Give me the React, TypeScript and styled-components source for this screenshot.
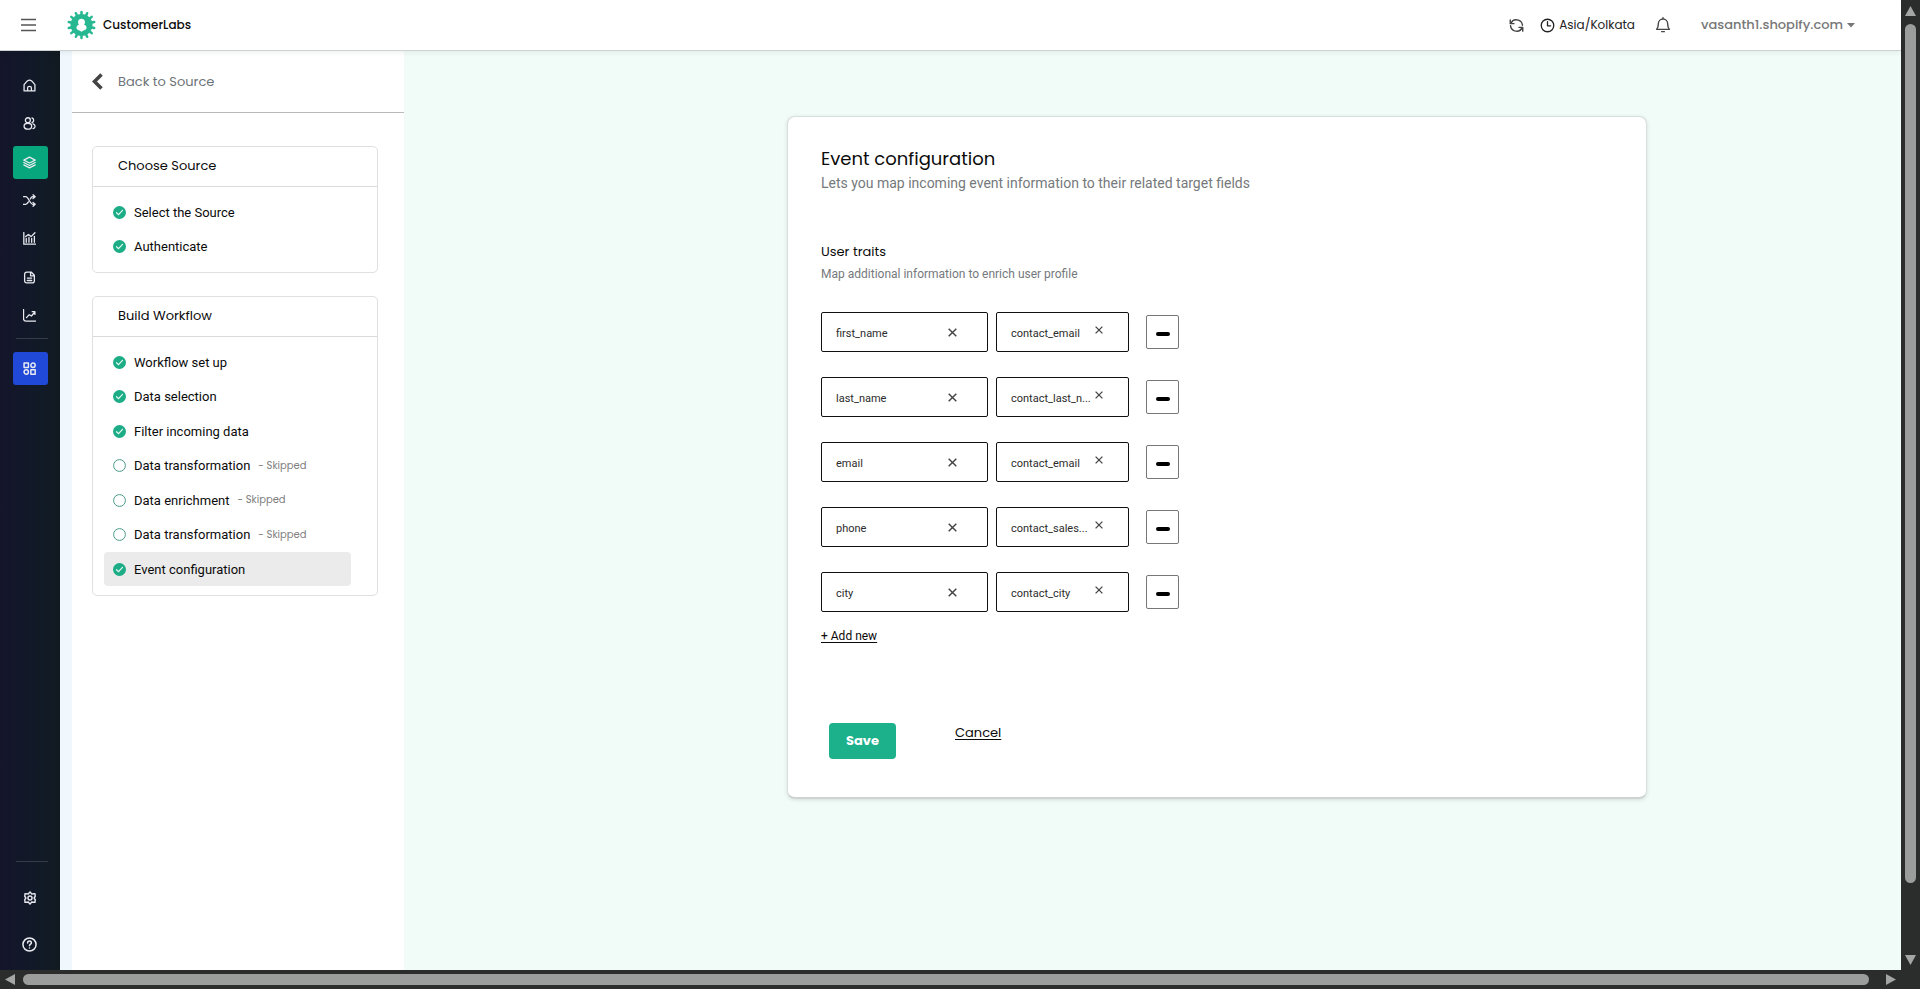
import React from "react";
import styled, { createGlobalStyle, css } from "styled-components";

const heading = `Poppins, Inter, "Open Sans", sans-serif`;
const copy = `Roboto, "Liberation Sans", sans-serif`;

const GlobalStyle = createGlobalStyle`
  *, *::before, *::after { box-sizing: border-box; }
  body { margin: 0; background: #2b2d2d; font-family: ${copy}; color: #0b0b0b; }
  button, input { font: inherit; color: inherit; }
  button { padding: 0; border: 0; background: none; cursor: pointer; }
  a { color: inherit; text-decoration: none; }
  h1, h2, h3, p, ul { margin: 0; padding: 0; font-weight: 400; }
  ul { list-style: none; }
  svg { display: block; flex: none; }
`;

const Frame = styled.div`
  display: grid;
  grid-template: minmax(0, 1fr) 19px / minmax(0, 1fr) 19px;
  min-height: 100vh;
`;

const Page = styled.div`
  display: flex;
  flex-direction: column;
  background: #f1fbf8;
`;

const Header = styled.header`
  display: flex;
  align-items: center;
  height: 51px;
  padding: 0 46px 0 20px;
  background: #fff;
  border-bottom: 1px solid #cdd3d2;
  box-shadow: 0 1px 6px rgba(0, 0, 0, 0.08);
  z-index: 1;
`;

const MenuButton = styled.button`
  color: #555;
`;

const Brand = styled.a`
  display: flex;
  align-items: center;
  gap: 7px;
  margin-left: 30px;
  font: 500 12px/20px ${heading};
`;

const HeaderTools = styled.div`
  display: flex;
  align-items: center;
  margin-left: auto;
  color: #444;
  font: 500 12px/20px ${heading};
`;

const Zone = styled.span`
  display: flex;
  align-items: center;
  gap: 4px;
  margin: 0 20px 0 16px;
  font-weight: 400;
  color: #222;
`;

const Account = styled.button`
  display: flex;
  align-items: center;
  gap: 4px;
  margin-left: 30px;
  font-size: 13px;
  color: #777;
`;

const Body = styled.div`
  display: flex;
  flex: 1;
`;

const Rail = styled.nav`
  display: flex;
  flex-direction: column;
  width: 60px;
  padding: 15px 12px 9px 13px;
  background: linear-gradient(90deg, #14152b, #111a27 70%, #121a20);
  color: #e8eaf0;
`;

const RailList = styled.ul`
  display: grid;
  grid-auto-rows: 1fr;
  align-items: center;
  height: 269px;
`;

const RailLink = styled.a<{ $fill?: string }>`
  display: flex;
  align-items: center;
  justify-content: center;
  height: 33px;
  padding-right: 2px;
  border-radius: 3px;
  background: ${(p) => p.$fill ?? "transparent"};
`;

const RailRule = styled.hr`
  width: 32px;
  height: 1px;
  margin: 3px 0 13px 3px;
  border: 0;
  background: #343b48;
`;

const RailFoot = styled.div`
  display: grid;
  gap: 14px;
  margin-top: auto;

  ${RailRule} {
    margin-bottom: 5px;
  }
`;

const Steps = styled.aside`
  width: 332px;
  margin-left: 12px;
  background: #fff;
  box-shadow: -12px 0 0 #f0f8fe;
`;

const Back = styled.a`
  display: flex;
  align-items: center;
  gap: 15px;
  height: 62px;
  padding-left: 20px;
  border-bottom: 1px solid #b9b9b9;
  font: 400 13px/20px ${heading};
  color: #6d7378;
`;

const StepCards = styled.div`
  display: grid;
  gap: 23px;
  padding: 33px 26px 33px 20px;
`;

const StepCard = styled.section`
  border: 1px solid #dfe0e0;
  border-radius: 5px;
`;

const StepTitle = styled.h2`
  padding: 9px 25px 10px;
  border-bottom: 1px solid #d9dbdb;
  font: 400 13px/20px ${heading};
`;

const StepList = styled.ul<{ $height: number }>`
  display: grid;
  grid-auto-rows: 1fr;
  height: ${(p) => p.$height}px;
  margin: 8px 26px 8px 11px;
`;

const StepLink = styled.a<{ $current?: boolean }>`
  display: flex;
  align-items: center;
  gap: 8px;
  height: 34px;
  padding-left: 9px;
  border-radius: 4px;
  font-size: 13px;
  ${(p) => p.$current && css`background: #ebebeb;`}
`;

const Skipped = styled.span`
  font: 400 10px/16px ${heading};
  color: #808080;
`;

const Main = styled.main`
  flex: 1;
  min-width: 0;
  padding: 65px 254px 65px 383px;
`;

const Card = styled.section`
  padding: 30px 33px 38px;
  background: #fff;
  border: 1px solid #d9dfdd;
  border-bottom: 2px solid #cdd4d2;
  border-radius: 8px;
  box-shadow: 0 1px 4px rgba(0, 0, 0, 0.12);
`;

const Title = styled.h1`
  font: 400 18px/24px ${heading};
`;

const Lead = styled.p`
  font-size: 14px;
  line-height: 24px;
  color: #75797c;
`;

const SectionTitle = styled.h2`
  margin-top: 47px;
  font: 400 13px/20px ${heading};
`;

const SectionLead = styled.p`
  font-size: 12px;
  line-height: 24px;
  color: #75797c;
`;

const Mappings = styled.div`
  display: grid;
  gap: 25px;
  margin-top: 26px;
`;

const Mapping = styled.div`
  display: flex;
  align-items: center;
  gap: 8px;
`;

const Field = styled.div<{ $wide?: boolean }>`
  display: flex;
  align-items: center;
  width: ${(p) => (p.$wide ? 167 : 133)}px;
  height: 40px;
  padding: 0 ${(p) => (p.$wide ? 30 : 25)}px 0 14px;
  border: 1px solid #111;
  border-radius: 2px;
`;

const FieldInput = styled.input`
  flex: 1;
  min-width: 0;
  height: 24px;
  padding: 2px 0 0;
  border: 0;
  outline: 0;
  background: none;
  font-size: 11px;
  color: #2c2c2c;
`;

const Clear = styled.button<{ $raised?: boolean }>`
  margin-bottom: ${(p) => (p.$raised ? 4 : 0)}px;
  color: #444;
`;

const Remove = styled.button`
  display: flex;
  align-items: center;
  justify-content: center;
  width: 33px;
  height: 34px;
  margin-left: 9px;
  padding-top: 4px;
  border: 1px solid #777;
  border-radius: 2px;
`;

const AddNew = styled.button`
  display: block;
  margin-top: 14px;
  font-size: 12px;
  line-height: 20px;
  text-decoration: underline;
  text-underline-offset: 2px;
`;

const Actions = styled.div`
  display: flex;
  align-items: flex-start;
  gap: 59px;
  margin: 77px 0 0 8px;
`;

const Save = styled.button`
  width: 67px;
  height: 36px;
  border-radius: 4px;
  background: #1cb08b;
  color: #fff;
  font: 700 13px/20px ${heading};
`;

const Cancel = styled.a`
  font: 400 13px/20px ${heading};
  text-decoration: underline;
  text-underline-offset: 2px;
`;

const ScrollTrack = styled.div<{ $vertical?: boolean }>`
  display: flex;
  flex-direction: ${(p) => (p.$vertical ? "column" : "row")};
  align-items: center;
  justify-content: space-between;
  gap: 7px;
  padding: ${(p) => (p.$vertical ? "6px 0 4px" : "0 5px 0 5px")};
  background: #2b2d2d;
`;

const ScrollRun = styled.div`
  flex: 1;
  align-self: stretch;
`;

const ScrollThumb = styled.div<{ $vertical?: boolean }>`
  width: ${(p) => (p.$vertical ? "11px" : "calc(100% - 9px)")};
  height: ${(p) => (p.$vertical ? "93%" : "11px")};
  margin: ${(p) => (p.$vertical ? "0 4px" : "4px 0")};
  border-radius: 6px;
  background: #9b9d9c;
`;

const Stroke = ({ size = 14, width = 1.5, children }: { size?: number; width?: number; children: React.ReactNode }) => (
  <svg width={size} height={size} viewBox="0 0 24 24" fill="none" stroke="currentColor" strokeWidth={width * 1.6} strokeLinecap="round" strokeLinejoin="round" aria-hidden>
    {children}
  </svg>
);

const Arrow = ({ d }: { d: string }) => (
  <svg width="11" height="11" viewBox="0 0 11 11" fill="#a4a6a5" aria-hidden><path d={d} /></svg>
);

const Logo = () => (
  <svg width="29" height="30" viewBox="-15 -15 30 30" aria-hidden>
    <g stroke="#27b892" strokeWidth="2.6" strokeLinecap="round">
      {Array.from({ length: 14 }, (_, i) => (
        <path key={i} d="M0 -10V-13.5" transform={`rotate(${(i * 360) / 14})`} />
      ))}
    </g>
    <circle r="11.4" fill="#27b892" />
    <path fill="#fff" d="M0 -6.400c2.200 0 3.600 1.500 3.600 3.500 0 1.200-.4 2-1 2.700C4.400.3 5.200 1.400 5.200 2.800 5.200 4.600 3.800 5.200 2.600 5.400L0 7 -2.600 5.400C-3.800 5.200-5.200 4.600-5.200 2.800-5.200 1.400-4.400.3-2.600-.2-3.200-.9-3.600-1.700-3.600-2.900c0-2 1.400-3.500 3.600-3.500z" />
  </svg>
);

const Done = () => (
  <svg width="13" height="13" viewBox="0 0 13 13" aria-hidden>
    <circle cx="6.500" cy="6.500" r="6.500" fill="#1cac86" />
    <path d="M3.500 6.700l2 1.900 4-4.300" fill="none" stroke="#e3f7f1" strokeWidth="1.200" strokeLinecap="round" />
  </svg>
);

const Pending = () => (
  <svg width="13" height="13" viewBox="0 0 13 13" aria-hidden>
    <circle cx="6.500" cy="6.500" r="5.900" fill="none" stroke="#4a9a88" strokeWidth="1" />
  </svg>
);

const Cross = ({ size }: { size: number }) => (
  <svg width={size} height={size} viewBox="0 0 8 8" fill="none" stroke="currentColor" strokeWidth="1.300" aria-hidden>
    <path d="M.6.6l6.800 6.800M7.400.6L.6 7.400" />
  </svg>
);

const railItems: { label: string; fill?: string; icon: React.ReactNode }[] = [
  { label: "Home", icon: <path d="M2 10.500L8 3.500Q12 .5 16 3.500L22 10.500V22H2zM8.500 22v-6q0-2.500 3.500-2.500t3.500 2.500v6" /> },
  { label: "Customers", icon: <><circle cx="9" cy="6" r="4.600" /><ellipse cx="9" cy="17" rx="7" ry="5.500" /><path d="M16.500 1.600a4.600 4.600 0 010 8.800M18.500 12.500c5 1.500 5 7.500 0 9" /></> },
  { label: "Sources", fill: "#07a67c", icon: <path d="M12 2l10.500 5.500L12 13 1.500 7.500zM1.500 12L12 17.500 22.500 12M1.500 16.500L12 22l10.500-5.500" /> },
  { label: "Workflows", icon: <path d="M1 5h4c5 0 8 14 13 14h4M1 19h4c2 0 3.500-2 5-4.500M13.500 9C15 6.500 16 5 18 5h4M18.500 1.500L22.500 5l-4 3.500M18.500 15.500l4 3.500-4 3.500" /> },
  { label: "Analytics", icon: <path d="M1.500 1v21.500H23M6 19v-7M11 19v-9M16 19v-7M21 19V8M5 8.500l5-4 5 4L22 1.500" /> },
  { label: "Reports", icon: <path d="M7 2h8l6 6v10q0 4-4 4H7q-4 0-4-4V6q0-4 4-4zM14 2v7h7M8 13h8M8 17.500h8" /> },
  { label: "Trends", icon: <path d="M1 1v17q0 4.500 4.500 4.500H24M6.500 16l5-5.500 4 2.500L22 5.500M17 5h5v5" /> },
];

type Step = { label: string; state: "done" | "skipped"; current?: boolean };

const stepGroups: { title: string; height: number; steps: Step[] }[] = [
  { title: "Choose Source", height: 69, steps: [
    { label: "Select the Source", state: "done" },
    { label: "Authenticate", state: "done" },
  ] },
  { title: "Build Workflow", height: 242, steps: [
    { label: "Workflow set up", state: "done" },
    { label: "Data selection", state: "done" },
    { label: "Filter incoming data", state: "done" },
    { label: "Data transformation", state: "skipped" },
    { label: "Data enrichment", state: "skipped" },
    { label: "Data transformation", state: "skipped" },
    { label: "Event configuration", state: "done", current: true },
  ] },
];

const mappings = [
  ["first_name", "contact_email"],
  ["last_name", "contact_last_n..."],
  ["email", "contact_email"],
  ["phone", "contact_sales..."],
  ["city", "contact_city"],
];

export default function App() {
  return (
    <>
      <GlobalStyle />
      <Frame>
        <Page>
          <Header>
            <MenuButton aria-label="Toggle menu">
              <svg width="17" height="14" viewBox="0 0 17 14" stroke="currentColor" strokeWidth="1.500" aria-hidden>
                <path d="M1 1.500h15M1 7h15M1 12.500h15" />
              </svg>
            </MenuButton>
            <Brand href="#"><Logo />CustomerLabs</Brand>
            <HeaderTools>
              <button aria-label="Refresh">
                <Stroke size={15} width={1.4}><path d="M2 3v6h6M22 21v-6h-6M3 9c2-5 7-7 12-5.500 4 1.300 6 4 6.500 8M21 15c-2 5-7 7-12 5.500-4-1.300-6-4-6.500-8" /></Stroke>
              </button>
              <Zone>
                <Stroke size={15} width={1.3}><circle cx="12" cy="12" r="10" /><path d="M12 6v6.500h5" /></Stroke>
                Asia/Kolkata
              </Zone>
              <button aria-label="Notifications">
                <Stroke size={16} width={1.3}><path d="M2.500 18.500C5 16 5 14 5 10a7 7 0 0114 0c0 4 0 6 2.500 8.500zM10 22h4M12 1v2" /></Stroke>
              </button>
              <Account>
                vasanth1.shopify.com
                <svg width="8" height="5" viewBox="0 0 8 5" fill="currentColor" aria-hidden><path d="M0 0h8L4 4.500z" /></svg>
              </Account>
            </HeaderTools>
          </Header>
          <Body>
            <Rail aria-label="Main">
              <RailList>
                {railItems.map((item) => (
                  <li key={item.label}>
                    <RailLink href="#" aria-label={item.label} $fill={item.fill}>
                      <Stroke size={13}>{item.icon}</Stroke>
                    </RailLink>
                  </li>
                ))}
              </RailList>
              <RailRule />
              <RailLink href="#" aria-label="Apps" $fill="#2149d8">
                <Stroke size={13} width={1.7}>
                  <rect x="2" y="2" width="8" height="8" /><circle cx="18.500" cy="6" r="4" />
                  <circle cx="6" cy="18.500" r="4" /><rect x="14.500" y="14.500" width="8" height="8" />
                </Stroke>
              </RailLink>
              <RailFoot>
                <RailRule />
                <RailLink href="#" aria-label="Settings">
                  <Stroke size={14}>
                    <path d="M12 1.500l3 3.700 5.500-.7.500 4.500-2 3 2 3-.5 4.500-5.500-.7-3 3.700-3-3.700-5.500.7L3 15l2-3-2-3 .5-4.500 5.500.7z" />
                    <circle cx="12" cy="12" r="3.500" />
                  </Stroke>
                </RailLink>
                <RailLink href="#" aria-label="Help">
                  <Stroke size={15}><circle cx="12" cy="12" r="10.500" /><path d="M9 9.500c0-4 6-4 6 0 0 2-3 2-3 4.500M12 17.500v.1" /></Stroke>
                </RailLink>
              </RailFoot>
            </Rail>
            <Steps>
              <Back href="#">
                <svg width="11" height="17" viewBox="0 0 11 17" fill="none" stroke="#444" strokeWidth="3.500" aria-hidden><path d="M9.500 1.500l-7 7 7 7" /></svg>
                Back to Source
              </Back>
              <StepCards>
                {stepGroups.map((group) => (
                  <StepCard key={group.title}>
                    <StepTitle>{group.title}</StepTitle>
                    <StepList $height={group.height}>
                      {group.steps.map((step, i) => (
                        <li key={i}>
                          <StepLink href="#" $current={step.current}>
                            {step.state === "done" ? <Done /> : <Pending />}
                            {step.label}
                            {step.state === "skipped" && <Skipped>- Skipped</Skipped>}
                          </StepLink>
                        </li>
                      ))}
                    </StepList>
                  </StepCard>
                ))}
              </StepCards>
            </Steps>
            <Main>
              <Card>
                <Title>Event configuration</Title>
                <Lead>Lets you map incoming event information to their related target fields</Lead>
                <SectionTitle>User traits</SectionTitle>
                <SectionLead>Map additional information to enrich user profile</SectionLead>
                <Mappings>
                  {mappings.map(([trait, source]) => (
                    <Mapping key={trait}>
                      <Field $wide>
                        <FieldInput aria-label="Trait" defaultValue={trait} />
                        <Clear aria-label={`Clear ${trait}`}><Cross size={9} /></Clear>
                      </Field>
                      <Field>
                        <FieldInput aria-label={`Source for ${trait}`} defaultValue={source} />
                        <Clear $raised aria-label={`Clear source for ${trait}`}><Cross size={8} /></Clear>
                      </Field>
                      <Remove aria-label={`Remove ${trait}`}>
                        <svg width="14" height="4" viewBox="0 0 14 4" aria-hidden><rect width="14" height="4" rx="2" /></svg>
                      </Remove>
                    </Mapping>
                  ))}
                </Mappings>
                <AddNew>+ Add new</AddNew>
                <Actions>
                  <Save>Save</Save>
                  <Cancel href="#">Cancel</Cancel>
                </Actions>
              </Card>
            </Main>
          </Body>
        </Page>
        <ScrollTrack $vertical>
          <Arrow d="M5.500 0L11 10H0z" />
          <ScrollRun><ScrollThumb $vertical /></ScrollRun>
          <Arrow d="M0 0h11L5.500 10z" />
        </ScrollTrack>
        <ScrollTrack>
          <Arrow d="M10 0v11L0 5.500z" />
          <ScrollRun><ScrollThumb /></ScrollRun>
          <Arrow d="M1 0v11l10-5.500z" />
        </ScrollTrack>
      </Frame>
    </>
  );
}
